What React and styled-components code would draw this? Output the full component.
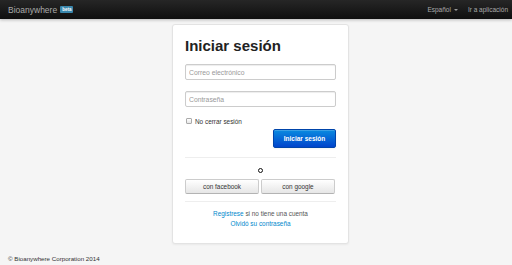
import React from 'react'
import styled, { createGlobalStyle } from 'styled-components'

const Global = createGlobalStyle`
  html, body { margin: 0; padding: 0; }
  body {
    background: #f5f5f5;
    font-family: "Liberation Sans", Arial, sans-serif;
    color: #333;
  }
`

const Page = styled.div`
  width: 512px;
  height: 265px;
  display: flex;
  flex-direction: column;
  overflow: hidden;
`

const Navbar = styled.div`
  height: 19px;
  flex: none;
  display: flex;
  align-items: center;
  padding: 0 4px 0 8px;
  background: linear-gradient(#262626, #0f0f0f);
  box-shadow: 0 1px 3px rgba(0,0,0,0.25);
`

const Brand = styled.div`
  display: flex;
  align-items: center;
  gap: 3px;
  font-size: 8.5px;
  color: #aaa;
`

const Badge = styled.span`
  background: #3a87ad;
  color: #fff;
  font-size: 4.5px;
  font-weight: bold;
  padding: 1px 2px;
  border-radius: 1px;
  line-height: 5px;
`

const NavLinks = styled.div`
  margin-left: auto;
  display: flex;
  align-items: center;
  gap: 10px;
  font-size: 6.5px;
  color: #aaa;
`

const Caret = styled.span`
  display: inline-block;
  margin-left: 3px;
  vertical-align: middle;
  border-left: 2px solid transparent;
  border-right: 2px solid transparent;
  border-top: 2px solid #999;
`

const Main = styled.div`
  flex: 1;
  display: flex;
  justify-content: center;
  padding: 5px 0 0 9px;
`

const Card = styled.div`
  width: 177px;
  height: 220px;
  box-sizing: border-box;
  padding: 13px 12px 0;
  background: #fff;
  border: 1px solid #e3e3e3;
  border-radius: 3px;
  box-shadow: 0 1px 2px rgba(0,0,0,0.05);
`

const Title = styled.h1`
  margin: 0 0 10px;
  font-size: 15px;
  line-height: 16px;
  font-weight: bold;
  color: #222;
`

const Input = styled.input`
  display: block;
  width: 100%;
  height: 16px;
  box-sizing: border-box;
  margin: 0 0 11px;
  padding: 0 3px;
  border: 1px solid #ccc;
  border-radius: 2px;
  box-shadow: inset 0 1px 1px rgba(0,0,0,0.075);
  font-family: inherit;
  font-size: 6.8px;
  outline: none;
  &::placeholder { color: #999; }
`

const CheckRow = styled.label`
  display: flex;
  align-items: center;
  gap: 3px;
  margin-top: -2px;
  padding-left: 1px;
  font-size: 6.4px;
  color: #333;
  height: 10px;
`

const Box = styled.span`
  width: 4px;
  height: 4px;
  border: 1px solid #aaa;
  border-radius: 1px;
  background: linear-gradient(#fff, #e6e6e6);
`

const Actions = styled.div`
  display: flex;
  justify-content: flex-end;
  margin-top: 3px;
`

const PrimaryButton = styled.button`
  width: 63px;
  height: 19px;
  border: 1px solid #0044aa;
  border-radius: 2px;
  background: linear-gradient(#0a8be0, #0044cc);
  color: #fff;
  font-family: inherit;
  font-weight: bold;
  font-size: 6.5px;
  padding: 0;
  box-shadow: inset 0 1px 0 rgba(255,255,255,0.2), 0 1px 2px rgba(0,0,0,0.05);
`

const Divider = styled.hr`
  border: none;
  border-top: 1px solid #eee;
  margin: ${p => p.$top}px 0 0;
`

const SpinnerRow = styled.div`
  display: flex;
  justify-content: center;
  padding: 10px 0 6px;
`

const Ring = styled.span`
  width: 3px;
  height: 3px;
  border: 1.5px solid #111;
  border-radius: 50%;
`

const SocialRow = styled.div`
  display: flex;
  gap: 2px;
`

const SocialButton = styled.button`
  width: 74px;
  height: 15px;
  padding: 0;
  border: 1px solid #ccc;
  border-bottom-color: #b3b3b3;
  border-radius: 2px;
  background: linear-gradient(#fff, #e6e6e6);
  color: #333;
  font-family: inherit;
  font-size: 6.4px;
`

const Links = styled.div`
  margin-top: 7px;
  text-align: center;
  font-size: 6.4px;
  line-height: 10px;
  color: #555;
`

const A = styled.a`
  color: #0088cc;
  text-decoration: none;
`

const Footer = styled.div`
  flex: none;
  height: 21px;
  box-sizing: border-box;
  padding: 0 0 3px 8px;
  font-size: 6.2px;
  line-height: 7px;
  color: #333;
  display: flex;
  align-items: flex-end;
`

export default function App() {
  return (
    <Page>
      <Global />
      <Navbar>
        <Brand>Bioanywhere <Badge>beta</Badge></Brand>
        <NavLinks>
          <span>Español<Caret /></span>
          <span>Ir a aplicación</span>
        </NavLinks>
      </Navbar>
      <Main>
        <Card>
          <Title>Iniciar sesión</Title>
          <Input placeholder="Correo electrónico" />
          <Input placeholder="Contraseña" type="password" />
          <CheckRow><Box />No cerrar sesión</CheckRow>
          <Actions>
            <PrimaryButton>Iniciar sesión</PrimaryButton>
          </Actions>
          <Divider $top={9} />
          <SpinnerRow><Ring /></SpinnerRow>
          <SocialRow>
            <SocialButton>con facebook</SocialButton>
            <SocialButton>con google</SocialButton>
          </SocialRow>
          <Divider $top={7} />
          <Links>
            <div><A href="#">Registrese</A> si no tiene una cuenta</div>
            <div><A href="#">Olvidó su contraseña</A></div>
          </Links>
        </Card>
      </Main>
      <Footer>© Bioanywhere Corporation 2014</Footer>
    </Page>
  )
}
